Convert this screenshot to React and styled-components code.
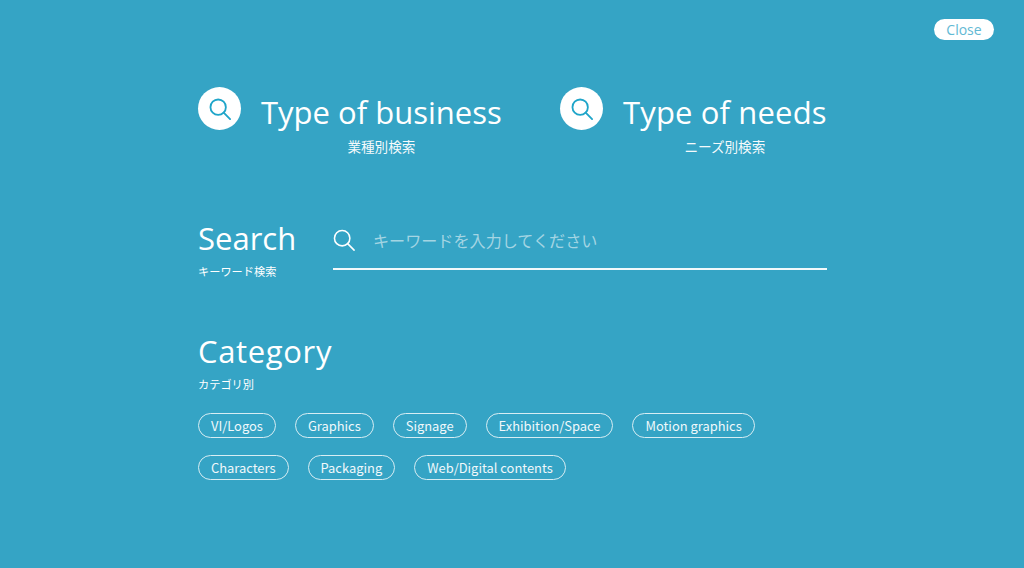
import React from "react";
import styled, { createGlobalStyle } from "styled-components";

const GlobalStyle = createGlobalStyle`
  html, body {
    margin: 0;
    padding: 0;
    background: #35a4c5;
  }
`;

const jp = `"Noto Sans CJK JP", "Noto Sans", sans-serif`;
const latin = `"Open Sans", "Noto Sans CJK JP", sans-serif`;

const Page = styled.div`
  width: 1024px;
  height: 568px;
  overflow: hidden;
  background: #35a4c5;
  color: #fff;
  box-sizing: border-box;
  padding-top: 19px;
`;

const TopBar = styled.div`
  display: flex;
  justify-content: flex-end;
  padding-right: 30px;
  height: 21px;
`;

const CloseButton = styled.button`
  all: unset;
  width: 60px;
  height: 21px;
  background: #fff;
  border-radius: 11px;
  color: #62b9d4;
  font: 14px/21px ${latin};
  text-align: center;
`;

const Content = styled.div`
  width: 629px;
  margin: 47px 0 0 198px;
`;

const TypeRow = styled.div`
  display: flex;
  height: 70px;
`;

const TypeBlock = styled.div`
  display: flex;
  gap: 20px;
  width: 362px;
  flex: none;
`;

const IconCircle = styled.div`
  width: 43px;
  height: 43px;
  border-radius: 50%;
  background: #fff;
  display: flex;
  align-items: center;
  justify-content: center;
  flex: none;
`;

const TypeText = styled.div`
  display: flex;
  flex-direction: column;
  align-items: center;
  padding-top: 4px;
`;

const BigTitle = styled.div`
  font: 400 31px/42px ${latin};
  letter-spacing: ${(p) => p.$spacing || 0}px;
  white-space: nowrap;
`;

const TypeSub = styled.div`
  font: 400 13.6px/18px ${jp};
  margin-top: 4px;
  opacity: 0.95;
`;

const SearchRow = styled.div`
  display: flex;
  margin-top: 60px;
`;

const SearchLabel = styled.div`
  width: 135px;
  flex: none;
`;

const SmallSub = styled.div`
  font: 400 11.2px/16px ${jp};
  margin-top: 4px;
`;

const SearchBox = styled.label`
  flex: 1;
  height: 52px;
  margin-top: 1px;
  box-sizing: border-box;
  border-bottom: 2px solid #f2f9fb;
  display: flex;
  align-items: center;
  gap: 18px;
  padding-bottom: 6px;
`;

const SearchInput = styled.input`
  all: unset;
  flex: 1;
  font: 400 16.1px/24px ${jp};
  color: #fff;
  &::placeholder {
    color: #a4d5e3;
    opacity: 1;
  }
`;

const CategorySection = styled.div`
  margin-top: 51px;
`;

const PillList = styled.div`
  display: flex;
  flex-wrap: wrap;
  gap: 17px 19px;
  margin-top: 21px;
`;

const Pill = styled.div`
  height: 25px;
  box-sizing: border-box;
  padding: 0 12px;
  border: 1px solid #d7edf3;
  border-radius: 13px;
  font: 400 12.92px/24px ${jp};
  color: #f0f8fb;
  white-space: nowrap;
`;

const Magnifier = ({ size, color, stroke }) => (
  <svg width={size} height={size} viewBox="0 0 24 24" fill="none" stroke={color} strokeWidth={stroke}>
    <circle cx="10" cy="10" r="8.4" />
    <path d="M16 16l7 7" strokeLinecap="round" />
  </svg>
);

const row = [
  "VI/Logos",
  "Graphics",
  "Signage",
  "Exhibition/Space",
  "Motion graphics",
  "Characters",
  "Packaging",
  "Web/Digital contents",
];

export default function App() {
  return (
    <Page>
      <GlobalStyle />
      <TopBar>
        <CloseButton>Close</CloseButton>
      </TopBar>
      <Content>
        <TypeRow>
          <TypeBlock>
            <IconCircle>
              <Magnifier size={22} color="#1fa5c9" stroke={2} />
            </IconCircle>
            <TypeText>
              <BigTitle>Type of business</BigTitle>
              <TypeSub>業種別検索</TypeSub>
            </TypeText>
          </TypeBlock>
          <TypeBlock>
            <IconCircle>
              <Magnifier size={22} color="#1fa5c9" stroke={2} />
            </IconCircle>
            <TypeText>
              <BigTitle $spacing={0.15}>Type of needs</BigTitle>
              <TypeSub>ニーズ別検索</TypeSub>
            </TypeText>
          </TypeBlock>
        </TypeRow>
        <SearchRow>
          <SearchLabel>
            <BigTitle>Search</BigTitle>
            <SmallSub>キーワード検索</SmallSub>
          </SearchLabel>
          <SearchBox>
            <Magnifier size={22} color="#fff" stroke={1.7} />
            <SearchInput placeholder="キーワードを入力してください" />
          </SearchBox>
        </SearchRow>
        <CategorySection>
          <BigTitle $spacing={0.65}>Category</BigTitle>
          <SmallSub>カテゴリ別</SmallSub>
          <PillList>
            {row.map((name) => (
              <Pill key={name}>{name}</Pill>
            ))}
          </PillList>
        </CategorySection>
      </Content>
    </Page>
  );
}
